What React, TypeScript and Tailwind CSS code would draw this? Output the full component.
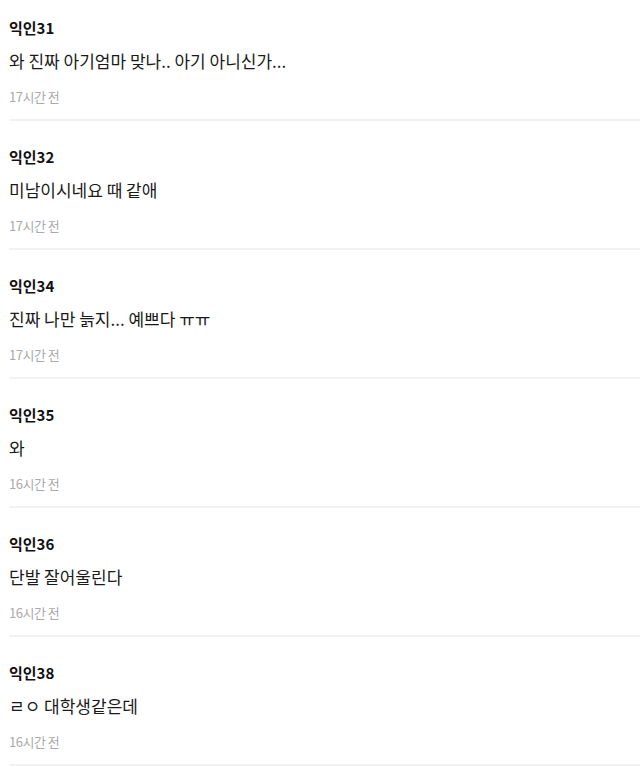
import React from 'react';

const comments = [
  { name: '익인31', body: '와 진짜 아기엄마 맞나.. 아기 아니신가...', time: '17시간 전' },
  { name: '익인32', body: '미남이시네요 때 같애', time: '17시간 전' },
  { name: '익인34', body: '진짜 나만 늙지... 예쁘다 ㅠㅠ', time: '17시간 전' },
  { name: '익인35', body: '와', time: '16시간 전' },
  { name: '익인36', body: '단발 잘어울린다', time: '16시간 전' },
  { name: '익인38', body: 'ㄹㅇ 대학생같은데', time: '16시간 전' },
];

export default function App() {
  return (
    <div
      className="min-h-screen bg-white pl-[9px] overflow-hidden"
      style={{ fontFamily: '"Noto Sans CJK KR", "Noto Sans", sans-serif' }}
    >
      <ul className="-mt-[8px]">
        {comments.map((c) => (
          <li key={c.name} className="pt-[26px] border-b-2 border-[#f2f2f2]">
            {/* author */}
            <div className="text-[15px] leading-[20px] font-bold text-[#111]">{c.name}</div>
            {/* comment body */}
            <p className="mt-[11px] text-[17px] leading-[24px] text-[#1a1a1a]">
              {c.body}
            </p>
            {/* timestamp */}
            <div className="mt-[15px] mb-[13px] text-[13px] leading-[18px] text-[#aaaaaa] tracking-[-0.5px]">
              {c.time}
            </div>
          </li>
        ))}
      </ul>
    </div>
  );
}
